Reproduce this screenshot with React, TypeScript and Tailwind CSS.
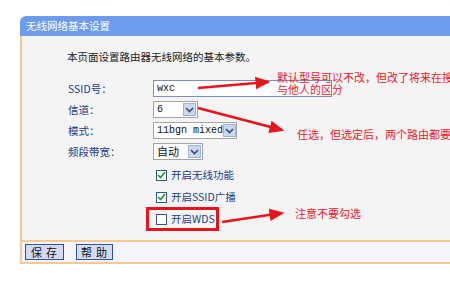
export default function App() {
  const font = { fontFamily: '"Noto Sans CJK SC", "Noto Sans", sans-serif' };
  return (
    <div className="relative w-[450px] h-[288px] overflow-hidden bg-white text-[10.5px]" style={font}>
      <div className="ml-[20px] mt-[16px] w-[440px]">
        <div className="h-[20px] rounded-tl-[6px] bg-[#6c9ceb] pl-[6px] leading-[20px] text-white">
          无线网络基本设置
        </div>
        <div className="h-[204px] border-l-2 border-[#f5c897] bg-[#f4f4f4] pl-[45px] pt-[13px]">
          <div className="h-[16px] leading-[16px] text-[#222]">本页面设置路由器无线网络的基本参数。</div>
          <div className="mt-[13px] pl-[1px]">
            <div className="flex h-[21px] items-center">
              <span className="w-[85px] text-[#1c3c8c]">SSID号：</span>
              <div className="h-[17px] w-[179px] border border-[#7f8db0] bg-white pl-[3px] leading-[15px] text-[10px] text-[#111]" style={{ fontFamily: '"Liberation Mono", monospace' }}>
                wxc
              </div>
            </div>
            <div className="flex h-[21px] items-center">
              <span className="w-[85px] text-[#1c3c8c]">信道：</span>
              <Select w="w-[45px]" value="6" mono />
            </div>
            <div className="flex h-[21px] items-center">
              <span className="w-[85px] text-[#1c3c8c]">模式：</span>
              <Select w="w-[84px]" value="11bgn mixed" mono />
            </div>
            <div className="flex h-[21px] items-center">
              <span className="w-[85px] text-[#1c3c8c]">频段带宽：</span>
              <Select w="w-[50px]" value="自动" />
            </div>
            <div className="mt-[2px] pl-[88px]">
              <Check checked label="开启无线功能" />
              <Check checked label="开启SSID广播" />
              <Check label="开启WDS" />
            </div>
          </div>
        </div>
        <div className="flex h-[24px] items-center gap-[12px] border-y-2 border-l-2 border-[#f5c897] bg-[#f3f5fa] pl-[3px]">
          <button className="h-[16px] w-[39px] border border-[#34509c] bg-[#d3dbf3] text-[11px] leading-[14px] tracking-[4px] pl-[3px] text-[#111]">保存</button>
          <button className="h-[16px] w-[37px] border border-[#34509c] bg-[#d3dbf3] text-[11px] leading-[14px] tracking-[4px] pl-[3px] text-[#111]">帮助</button>
        </div>
      </div>

      {/* annotations */}
      <div className="absolute left-[146px] top-[207px] h-[24px] w-[73px] border-[3px] border-[#e8141c]" />
      <svg className="absolute left-0 top-0" width="450" height="288">
        <defs>
          <marker id="ah" markerWidth="6" markerHeight="6" refX="5" refY="3" orient="auto" markerUnits="strokeWidth">
            <path d="M0,0.5 L6,3 L0,5.5 Z" fill="#e8141c" />
          </marker>
        </defs>
        <line x1="198" y1="88" x2="268" y2="82" stroke="#e8141c" strokeWidth="2.5" markerEnd="url(#ah)" />
        <line x1="198" y1="108" x2="282" y2="130" stroke="#e8141c" strokeWidth="2.5" markerEnd="url(#ah)" />
        <line x1="222" y1="222" x2="282" y2="213" stroke="#e8141c" strokeWidth="2.5" markerEnd="url(#ah)" />
      </svg>
      <div className="absolute left-[277px] top-[71px] text-[11px] leading-[12px] text-[#e8202a] whitespace-nowrap">
        <div>默认型号可以不改，但改了将来在搜索</div>
        <div>与他人的区分</div>
      </div>
      <div className="absolute left-[297px] top-[126px] text-[11px] whitespace-nowrap text-[#e8202a]">任选，但选定后，两个路由都要一致</div>
      <div className="absolute left-[295px] top-[205px] text-[11px] whitespace-nowrap text-[#e8202a]">注意不要勾选</div>
    </div>
  );
}

function Select({ w, value, mono }: { w: string; value: string; mono?: boolean }) {
  return (
    <div className={`flex h-[17px] ${w} items-center justify-between overflow-hidden border border-[#a5a5a5] bg-white pl-[3px]`}>
      <span
        className={mono ? "whitespace-nowrap text-[10px] text-[#111]" : "whitespace-nowrap text-[11px] text-[#111]"}
        style={mono ? { fontFamily: '"Liberation Mono", monospace' } : undefined}
      >
        {value}
      </span>
      <span className="mr-[1px] flex h-[13px] w-[13px] shrink-0 items-center justify-center border border-[#9fb4da] bg-[#c9d8f1]">
        <svg width="9" height="6" viewBox="0 0 9 6">
          <path d="M1 1 L4.5 4.5 L8 1" fill="none" stroke="#3a4a6a" strokeWidth="1.6" />
        </svg>
      </span>
    </div>
  );
}

function Check({ checked, label }: { checked?: boolean; label: string }) {
  return (
    <div className="flex h-[22px] items-center gap-[4px]">
      <span className="flex h-[11px] w-[11px] items-center justify-center border border-[#33558a] bg-white">
        {checked && (
          <svg width="9" height="8" viewBox="0 0 9 8">
            <path d="M1 4 L3.5 6.5 L8 1" fill="none" stroke="#1f9a2e" strokeWidth="1.7" />
          </svg>
        )}
      </span>
      <span className="text-[#1c3c8c]">{label}</span>
    </div>
  );
}
